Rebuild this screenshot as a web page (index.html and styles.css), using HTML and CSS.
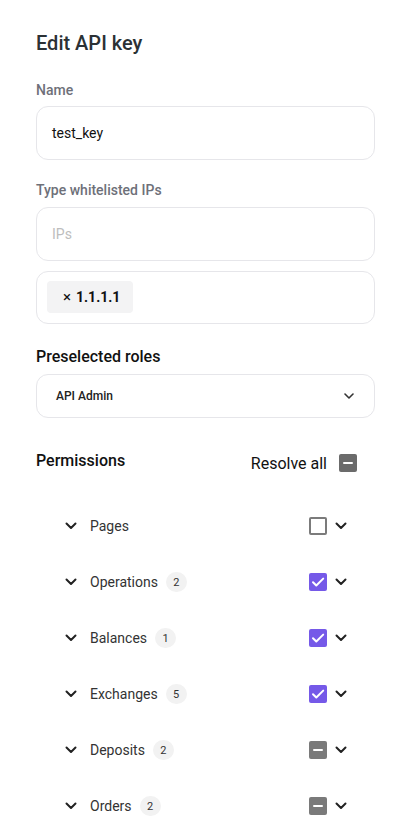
FILE: index.html
```html
<!DOCTYPE html>
<html lang="en">
<head>
<meta charset="utf-8">
<title>Edit API key</title>
<link rel="stylesheet" href="styles.css">
</head>
<body>
<div class="page">
  <h1 class="title">Edit API key</h1>

  <label class="label">Name</label>
  <div class="field"><span class="value">test_key</span></div>

  <label class="label label-ips">Type whitelisted IPs</label>
  <div class="field"><span class="placeholder">IPs</span></div>
  <div class="chips">
    <span class="chip"><span class="chip-x">×</span><b>1.1.1.1</b></span>
  </div>

  <div class="section-title">Preselected roles</div>
  <div class="select">
    <span>API Admin</span>
    <svg class="sel-chev" width="10" height="6" viewBox="0 0 10 6"><path d="M1 1l4 4 4-4" fill="none" stroke="#333" stroke-width="1.6" stroke-linecap="round" stroke-linejoin="round"/></svg>
  </div>

  <div class="perm-head">
    <span class="section-title perm-title">Permissions</span>
    <span class="resolve">Resolve all <span class="cb cb-ind cb-dark"></span></span>
  </div>

  <ul class="perms">
    <li class="row">
      <svg class="chev" width="12" height="8" viewBox="0 0 12 8"><path d="M1.5 1.5l4.5 4.5 4.5-4.5" fill="none" stroke="#222" stroke-width="2" stroke-linecap="round" stroke-linejoin="round"/></svg>
      <span class="name">Pages</span>
      <span class="spacer"></span>
      <span class="cb cb-empty"></span>
      <svg class="chev chev-r" width="12" height="8" viewBox="0 0 12 8"><path d="M1.5 1.5l4.5 4.5 4.5-4.5" fill="none" stroke="#222" stroke-width="2" stroke-linecap="round" stroke-linejoin="round"/></svg>
    </li>
    <li class="row">
      <svg class="chev" width="12" height="8" viewBox="0 0 12 8"><path d="M1.5 1.5l4.5 4.5 4.5-4.5" fill="none" stroke="#222" stroke-width="2" stroke-linecap="round" stroke-linejoin="round"/></svg>
      <span class="name">Operations</span><span class="badge">2</span>
      <span class="spacer"></span>
      <span class="cb cb-checked"><svg width="18" height="18" viewBox="0 0 18 18"><path d="M4 9.2l3.3 3.3L14.2 5.6" fill="none" stroke="#fff" stroke-width="2" stroke-linecap="round" stroke-linejoin="round"/></svg></span>
      <svg class="chev chev-r" width="12" height="8" viewBox="0 0 12 8"><path d="M1.5 1.5l4.5 4.5 4.5-4.5" fill="none" stroke="#222" stroke-width="2" stroke-linecap="round" stroke-linejoin="round"/></svg>
    </li>
    <li class="row">
      <svg class="chev" width="12" height="8" viewBox="0 0 12 8"><path d="M1.5 1.5l4.5 4.5 4.5-4.5" fill="none" stroke="#222" stroke-width="2" stroke-linecap="round" stroke-linejoin="round"/></svg>
      <span class="name">Balances</span><span class="badge">1</span>
      <span class="spacer"></span>
      <span class="cb cb-checked"><svg width="18" height="18" viewBox="0 0 18 18"><path d="M4 9.2l3.3 3.3L14.2 5.6" fill="none" stroke="#fff" stroke-width="2" stroke-linecap="round" stroke-linejoin="round"/></svg></span>
      <svg class="chev chev-r" width="12" height="8" viewBox="0 0 12 8"><path d="M1.5 1.5l4.5 4.5 4.5-4.5" fill="none" stroke="#222" stroke-width="2" stroke-linecap="round" stroke-linejoin="round"/></svg>
    </li>
    <li class="row">
      <svg class="chev" width="12" height="8" viewBox="0 0 12 8"><path d="M1.5 1.5l4.5 4.5 4.5-4.5" fill="none" stroke="#222" stroke-width="2" stroke-linecap="round" stroke-linejoin="round"/></svg>
      <span class="name">Exchanges</span><span class="badge">5</span>
      <span class="spacer"></span>
      <span class="cb cb-checked"><svg width="18" height="18" viewBox="0 0 18 18"><path d="M4 9.2l3.3 3.3L14.2 5.6" fill="none" stroke="#fff" stroke-width="2" stroke-linecap="round" stroke-linejoin="round"/></svg></span>
      <svg class="chev chev-r" width="12" height="8" viewBox="0 0 12 8"><path d="M1.5 1.5l4.5 4.5 4.5-4.5" fill="none" stroke="#222" stroke-width="2" stroke-linecap="round" stroke-linejoin="round"/></svg>
    </li>
    <li class="row">
      <svg class="chev" width="12" height="8" viewBox="0 0 12 8"><path d="M1.5 1.5l4.5 4.5 4.5-4.5" fill="none" stroke="#222" stroke-width="2" stroke-linecap="round" stroke-linejoin="round"/></svg>
      <span class="name">Deposits</span><span class="badge">2</span>
      <span class="spacer"></span>
      <span class="cb cb-ind"></span>
      <svg class="chev chev-r" width="12" height="8" viewBox="0 0 12 8"><path d="M1.5 1.5l4.5 4.5 4.5-4.5" fill="none" stroke="#222" stroke-width="2" stroke-linecap="round" stroke-linejoin="round"/></svg>
    </li>
    <li class="row">
      <svg class="chev" width="12" height="8" viewBox="0 0 12 8"><path d="M1.5 1.5l4.5 4.5 4.5-4.5" fill="none" stroke="#222" stroke-width="2" stroke-linecap="round" stroke-linejoin="round"/></svg>
      <span class="name">Orders</span><span class="badge">2</span>
      <span class="spacer"></span>
      <span class="cb cb-ind"></span>
      <svg class="chev chev-r" width="12" height="8" viewBox="0 0 12 8"><path d="M1.5 1.5l4.5 4.5 4.5-4.5" fill="none" stroke="#222" stroke-width="2" stroke-linecap="round" stroke-linejoin="round"/></svg>
    </li>
  </ul>
</div>
</body>
</html>
```

FILE: styles.css
```css
* { box-sizing: border-box; }
html, body { margin: 0; padding: 0; background: #fff; }
body {
  font-family: Roboto, "Liberation Sans", Arial, sans-serif;
  color: #111;
  overflow: hidden;
  height: 826px;
}
.page {
  padding: 31px 34px 0 36px;
  display: flex;
  flex-direction: column;
}
.title {
  margin: 0;
  font-size: 20px;
  line-height: 24px;
  font-weight: 500;
  color: #2b3135;
}
.label {
  display: block;
  margin-top: 25px;
  font-size: 14px;
  line-height: 20px;
  font-weight: 500;
  color: #6e7079;
}
.label-ips { margin-top: 20px; }
.field {
  margin-top: 6px;
  height: 54px;
  border: 1px solid #e6e6ea;
  border-radius: 12px;
  padding: 0 15px;
  display: flex;
  align-items: center;
  font-size: 14px;
}
.label-ips + .field { margin-top: 7px; }
.value { color: #111; }
.placeholder { color: #bdbdbd; }
.chips {
  margin-top: 10px;
  border: 1px solid #e6e6ea;
  border-radius: 12px;
  padding: 9px 10px 10px;
  display: flex;
}
.chip {
  height: 32px;
  background: #f3f3f4;
  border-radius: 4px;
  padding: 0 13px 0 16px;
  display: flex;
  align-items: center;
  font-size: 14px;
  color: #111;
}
.chip-x { font-size: 15px; margin-right: 5px; }
.chip b { font-weight: 700; }
.section-title {
  margin-top: 23px;
  font-size: 16px;
  line-height: 20px;
  font-weight: 500;
  color: #111;
}
.select {
  margin-top: 7px;
  height: 44px;
  border: 1px solid #e6e6ea;
  border-radius: 12px;
  padding: 0 20px 0 19px;
  display: flex;
  align-items: center;
  justify-content: space-between;
  font-size: 12px;
  font-weight: 500;
  color: #222;
}
.perm-head {
  margin-top: 33px;
  display: flex;
  align-items: center;
  justify-content: space-between;
  padding-right: 18px;
  height: 20px;
}
.perm-title { margin-top: 0; }
.resolve {
  display: flex;
  align-items: center;
  gap: 12px;
  font-size: 16px;
  color: #111;
  margin-top: 4px;
}
.cb {
  width: 18px;
  height: 18px;
  border-radius: 2px;
  display: inline-flex;
  align-items: center;
  justify-content: center;
  flex: none;
  position: relative;
}
.cb-empty { border: 2px solid #7b7b7b; background: #fff; }
.cb-checked { background: #7559e8; }
.cb-ind { background: #7a7a7a; }
.cb-dark { background: #6b6b6b; }
.cb-ind::after {
  content: "";
  width: 10px;
  height: 2px;
  background: #fff;
  border-radius: 1px;
}
.perms {
  list-style: none;
  margin: 27px 0 0;
  padding: 0 28px 0 29px;
}
.row {
  height: 56px;
  display: flex;
  align-items: center;
}
.chev { flex: none; }
.row > .chev:first-child { margin-right: 13px; }
.chev-r { margin-left: 8px; }
.name {
  font-size: 14px;
  color: #333;
}
.badge {
  margin-left: 8px;
  width: 21px;
  height: 20px;
  border-radius: 10px;
  background: #f2f2f2;
  font-size: 11px;
  color: #333;
  display: inline-flex;
  align-items: center;
  justify-content: center;
}
.spacer { flex: 1; }
```
